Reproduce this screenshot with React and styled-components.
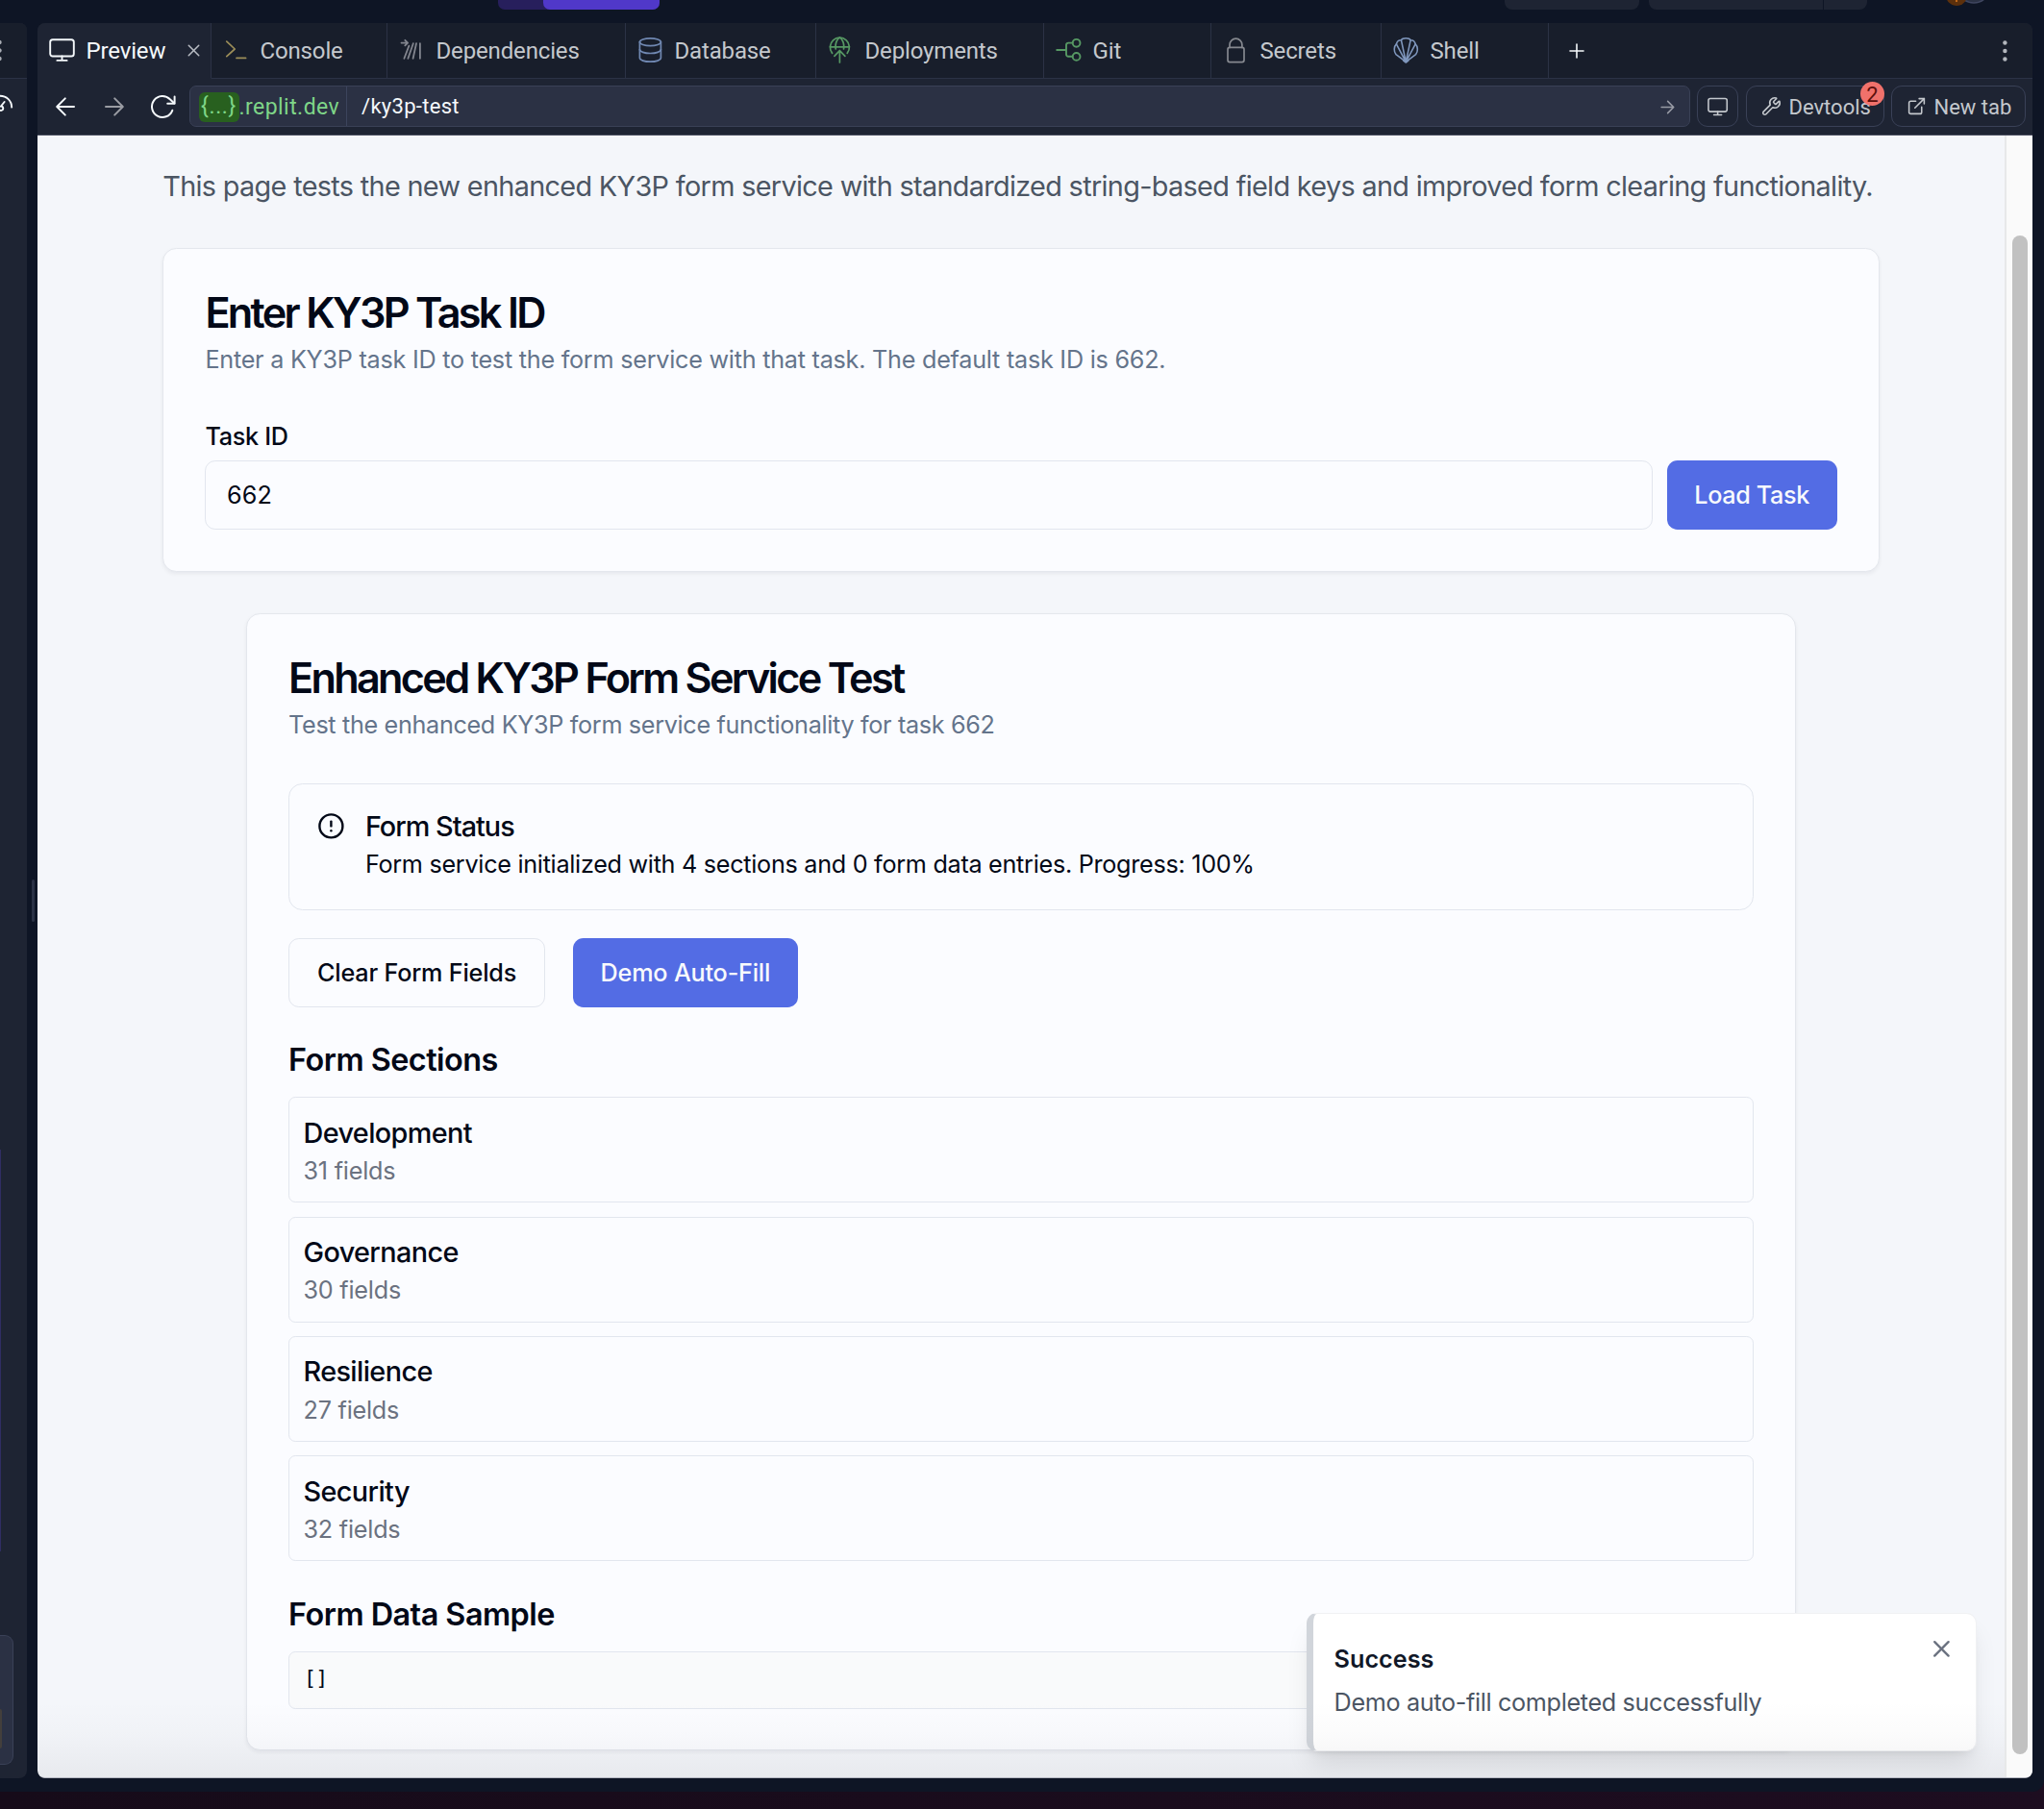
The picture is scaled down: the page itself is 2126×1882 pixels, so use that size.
import React from "react";
import styled, { createGlobalStyle } from "styled-components";
import { X, Wrench, ExternalLink, CircleAlert } from "lucide-react";

const GlobalStyle = createGlobalStyle`
  *, *::before, *::after { box-sizing: border-box; }
  html, body { margin: 0; padding: 0; background: #190b1a; }
  h1, h2, h3, p, pre { margin: 0; }
  button, input { font: inherit; color: inherit; }
`;

const ui = `Roboto, "Liberation Sans", sans-serif`;
const pageFont = `Inter, "Liberation Sans", sans-serif`;

/* ---------- window frame ---------- */

const Desktop = styled.div`
  width: 2126px;
  height: 1882px;
  overflow: hidden;
  background: linear-gradient(90deg, #160b19, #1d0d20);
  font-family: ${ui};
`;

const Window = styled.div`
  height: 1864px;
  display: flex;
  flex-direction: column;
  background: #0e1525;
  border-radius: 0 0 12px 0;
`;

const TopBar = styled.header`
  height: 24px;
  display: flex;
  align-items: flex-start;
  padding-left: 518px;
`;

const RunGroup = styled.div`
  width: 168px;
  height: 10px;
  display: flex;
  justify-content: flex-end;
  background: #271f5c;
  border-radius: 0 0 7px 7px;
`;

const RunButton = styled.div`
  width: 121px;
  height: 10px;
  background: #5038c9;
  border-radius: 0 0 7px 7px;
`;

const HeaderPill = styled.div`
  width: ${(p) => p.$width}px;
  height: 10px;
  margin-left: ${(p) => p.$gap}px;
  display: flex;
  justify-content: flex-end;
  background: #1e2433;
  border-radius: 0 0 8px 8px;
`;

const PillSplit = styled.div`
  width: 46px;
  border-left: 1px solid #0e1525;
`;

const Avatars = styled.div`
  display: flex;
  align-items: flex-start;
  margin-left: 80px;
`;

const Workspace = styled.div`
  flex: none;
  height: 1825.5px;
  display: flex;
`;

/* ---------- left sliver ---------- */

const SidePanel = styled.aside`
  width: 28px;
  display: flex;
  flex-direction: column;
  background: #1e2433;
  border-radius: 0 7px 8px 0;
  overflow: hidden;
`;

const SideTab = styled.div`
  height: 58px;
  background: #181e2b;
  border-bottom: 1px solid #2b3245;
`;

const SideTool = styled.div`
  height: 60px;
`;

const SideBody = styled.div`
  flex: 1;
  display: flex;
  flex-direction: column;
  align-items: flex-start;
  padding-top: 1054px;
`;

const SideMessage = styled.div`
  width: 1px;
  height: 418px;
  background: #302d62;
`;

const SideComposer = styled.div`
  width: 14px;
  height: 135px;
  margin-top: 87px;
  padding-top: 76px;
  background: #2b3144;
  border: 1px solid #3a4157;
  border-left: 0;
  border-radius: 0 9px 9px 0;
`;

const ComposerChip = styled.div`
  width: 2px;
  height: 41px;
  background: #433f3c;
  border-radius: 0 3px 3px 0;
`;

const Gutter = styled.div`
  width: 11px;
  display: flex;
  align-items: flex-start;
  justify-content: center;
  padding: 891px 0 0 1px;
`;

const GutterHandle = styled.div`
  width: 3px;
  height: 44px;
  border-radius: 2px;
  background: #2b3245;
`;

/* ---------- pane with tabs ---------- */

const Pane = styled.main`
  width: 2075px;
  display: flex;
  flex-direction: column;
  background: #1e2433;
  border-radius: 8px;
  overflow: hidden;
`;

const TabBar = styled.nav`
  height: 58px;
  flex: none;
  display: flex;
  background: #181e2b;
`;

const Tab = styled.div`
  width: ${(p) => p.$width}px;
  display: flex;
  align-items: center;
  gap: 10px;
  padding: 0 12px 1px;
  color: ${(p) => (p.$active ? "#f5f9fc" : "#c4c8cd")};
  background: ${(p) => (p.$active ? "#1e2433" : "transparent")};
  border-right: 1px solid #2b3245;
  border-bottom: 1px solid ${(p) => (p.$active ? "#1e2433" : "#2b3245")};
  font-size: 24px;
  line-height: 28px;
  letter-spacing: -0.15px;

  svg { flex: none; display: block; }
  svg.close { margin-left: auto; margin-right: -5px; }
`;

const TabLabel = styled.span`
  padding: 2px 0 0 0.5px;
`;

const TabBarRest = styled.div`
  flex: 1;
  display: flex;
  align-items: center;
  justify-content: space-between;
  padding: 0 21px 0 20px;
  border-bottom: 1px solid #2b3245;
`;

const Toolbar = styled.div`
  height: 59px;
  flex: none;
  display: flex;
  align-items: center;
  padding: 0 7px 1px 17px;
  border-bottom: 1px solid #4a4e5f;
  color: #c4c8cd;
  font-size: 22px;
  line-height: 26px;
`;

const NavButtons = styled.div`
  width: 141px;
  display: flex;
  align-items: center;
  gap: 27px;
  svg { flex: none; display: block; }
  svg.reload { margin-left: -3px; }
`;

const UrlBar = styled.div`
  width: 1561px;
  height: 43px;
  display: flex;
  background: #2b3144;
  border: 1px solid #3a4157;
  border-radius: 7px;
  overflow: hidden;
`;

const UrlHost = styled.div`
  width: 163px;
  flex: none;
  display: flex;
  align-items: center;
  padding: 2px 0 0 8.5px;
  border-right: 1px solid #3c445c;
  color: #7fd688;
  font-size: 23px;
  letter-spacing: 0.45px;
`;

const UrlToken = styled.span`
  width: 42px;
  height: 31px;
  line-height: 30px;
  text-align: center;
  background: #28601f;
  border-radius: 6px;
  letter-spacing: 0.6px;
`;

const UrlPath = styled.div`
  flex: 1;
  display: flex;
  align-items: center;
  justify-content: space-between;
  padding: 1px 14px 0 15px;
  color: #f5f9fc;
  letter-spacing: 0.3px;
`;

const ToolButton = styled.button`
  width: ${(p) => p.$width}px;
  height: 43px;
  margin: 0 0 0 ${(p) => p.$gap ?? 7}px;
  padding: 0 0 0 ${(p) => p.$pad}px;
  display: flex;
  align-items: center;
  gap: 7px;
  position: relative;
  background: transparent;
  border: 1px solid #3a4157;
  border-radius: 11px;
  white-space: nowrap;
  svg { flex: none; display: block; }
`;

const ToolLabel = styled.span`
  padding: 2px 0 0 0.5px;
`;

const CountBadge = styled.span`
  position: absolute;
  top: -5px;
  right: -1px;
  width: 25px;
  height: 25px;
  line-height: 27px;
  text-align: center;
  font-size: 22px;
  color: #5c0f0c;
  background: #f0716b;
  border-radius: 50%;
`;

/* ---------- previewed page ---------- */

const Viewport = styled.div`
  flex: 1;
  min-height: 0;
  display: flex;
  position: relative;
  overflow: hidden;
  background: #f4f6fa;
  border-bottom: 1px solid #b4b7c1;
  border-radius: 0 0 7px 7px;
  font-family: ${pageFont};
  color: #020817;
`;

const Page = styled.div`
  width: 2046px;
  display: flex;
  flex-direction: column;
  align-items: center;
  padding-top: 31.4px;
`;

const ScrollTrack = styled.div`
  width: 29px;
  padding: 104px 0 0 6px;
  background: #fafafa;
  border-left: 2px solid #e7e8e9;
`;

const ScrollThumb = styled.div`
  width: 16px;
  height: 1580px;
  border-radius: 8px;
  background: #c1c1c1;
`;

const Intro = styled.p`
  width: 1785.6px;
  height: 43.2px;
  line-height: 43.2px;
  margin-bottom: 42.4px;
  font-size: 28.8px;
  letter-spacing: -0.658px;
  white-space: nowrap;
  color: #4b5563;
`;

const Card = styled.section`
  width: ${(p) => p.$width}px;
  margin-bottom: 43.2px;
  padding: 45px 43.2px 42px;
  background: #fbfcff;
  border: 1px solid #e4e7ed;
  border-radius: 14.4px;
  box-shadow: 0 2px 4px rgba(15, 23, 42, 0.06);
`;

const CardTitle = styled.h2`
  font-size: 43.2px;
  line-height: 43.2px;
  font-weight: 600;
  letter-spacing: -2.7px;
  margin-bottom: 9px;
  white-space: nowrap;
`;

const CardDescription = styled.p`
  font-size: 25.2px;
  line-height: 36px;
  letter-spacing: ${(p) => p.$track}px;
  margin-bottom: 43.2px;
  color: #64748b;
`;

const Label = styled.label`
  display: block;
  font-size: 25.2px;
  line-height: 39px;
  font-weight: 500;
  letter-spacing: -0.3px;
  margin-bottom: 4.2px;
`;

const FieldRow = styled.div`
  display: flex;
  gap: 14.4px;
  margin-bottom: 1px;
`;

const TextInput = styled.input`
  flex: 1;
  height: 72px;
  padding: 0 21.6px;
  font-size: 25.2px;
  letter-spacing: 0.2px;
  background: #fbfcff;
  border: 1px solid #e2e6ee;
  border-radius: 10.8px;
  outline: none;
`;

const Button = styled.button`
  width: ${(p) => p.$width}px;
  height: 72px;
  padding: 0;
  font-size: 25.2px;
  font-weight: 500;
  letter-spacing: ${(p) => p.$track ?? -0.2}px;
  color: ${(p) => (p.$outline ? "#020817" : "#f8fafc")};
  background: ${(p) => (p.$outline ? "#fbfcff" : "#536ce4")};
  border: ${(p) => (p.$outline ? "1px solid #e2e6ee" : "0")};
  border-radius: 10.8px;
`;

const Alert = styled.div`
  height: 131.5px;
  display: flex;
  gap: 21.2px;
  padding: 28.8px;
  border: 1px solid #e2e6ee;
  border-radius: 14.4px;
`;

const AlertTitle = styled.h3`
  font-size: 28.8px;
  line-height: 30px;
  font-weight: 500;
  letter-spacing: -0.98px;
  margin-bottom: 6.4px;
`;

const AlertText = styled.p`
  font-size: 25.2px;
  line-height: 36px;
  letter-spacing: -0.285px;
`;

const Actions = styled.div`
  display: flex;
  gap: 28.8px;
  margin: 29.6px 0 28.8px;
`;

const Heading = styled.h3`
  font-size: 32.4px;
  line-height: 52px;
  font-weight: 600;
  letter-spacing: -0.53px;
  margin-bottom: 12.3px;
`;

const SectionList = styled.div`
  display: flex;
  flex-direction: column;
  gap: 14.4px;
  margin-bottom: 29.2px;
`;

const SectionItem = styled.div`
  height: 110px;
  padding: 14.4px;
  border: 1px solid #e2e6ee;
  border-radius: 7.2px;
`;

const SectionName = styled.div`
  font-size: 28.8px;
  line-height: 43.2px;
  font-weight: 500;
  letter-spacing: -0.6px;
`;

const SectionCount = styled.div`
  font-size: 25.2px;
  line-height: 36px;
  letter-spacing: -0.22px;
  color: #6b7280;
`;

const CodeSample = styled.pre`
  height: 60px;
  padding: 12.6px 15px;
  font-family: "DejaVu Sans Mono", "Liberation Mono", monospace;
  font-size: 21.6px;
  line-height: 28.8px;
  letter-spacing: -0.9px;
  background: #f9fafb;
  border: 1px solid #e2e6ee;
  border-radius: 7.2px;
`;

const BottomShade = styled.div`
  position: absolute;
  left: 0;
  right: 29px;
  bottom: 0;
  height: 80px;
  pointer-events: none;
  background: linear-gradient(rgba(20, 20, 30, 0), rgba(20, 20, 30, 0.015) 45%, rgba(20, 20, 30, 0.055));
`;

const Toast = styled.div`
  position: absolute;
  top: 1537.4px;
  right: 58px;
  width: 697px;
  height: 143.4px;
  display: flex;
  justify-content: space-between;
  padding: 29px 20.8px 0 21.6px;
  background: #fff;
  border: 1px solid #f0f1f3;
  border-left: 7px solid #d1d5db;
  border-radius: 10.8px;
  box-shadow: 0 18px 27px -5px rgba(0, 0, 0, 0.1), 0 7px 11px -7px rgba(0, 0, 0, 0.1);
`;

const ToastTitle = styled.div`
  font-size: 25.2px;
  line-height: 36px;
  font-weight: 600;
  margin-bottom: 9px;
  color: #111827;
`;

const ToastText = styled.div`
  font-size: 25.2px;
  line-height: 36px;
  letter-spacing: -0.34px;
  color: #4b5563;
`;

const ToastClose = styled.div`
  margin-top: -7px;
  color: #6b7280;
  svg { display: block; }
`;

/* ---------- icons ---------- */

const Icon = ({ children, color, size = 28, width = 1.7 }) => (
  <svg width={size} height={size} viewBox="0 0 28 28" fill="none" stroke={color}
    strokeWidth={width} strokeLinecap="round" strokeLinejoin="round">
    {children}
  </svg>
);

const MonitorIcon = ({ color = "currentColor", size, width = 1.9 }) => (
  <Icon color={color} size={size} width={width}>
    <rect x="1.2" y="3.2" width="24.6" height="17.3" rx="2.6" />
    <path d="M13.5 20.5v4.3M8.4 24.9h10.2" />
  </Icon>
);

const ConsoleIcon = () => (
  <Icon color="#9b8d58">
    <path d="M3.8 5.2 12.2 13 3.8 20.6M14 22.4h9.6" />
  </Icon>
);

const DependenciesIcon = () => (
  <Icon color="#82858e" width={1.8}>
    <path d="M2.5 6.6h6.3M6.3 3.8l2.8 2.8-2.8 2.8M10.4 9.6 5.4 22.8M14.8 7.2 9.4 22.8M18 7.2l-3.4 15.6M21.9 7.2v15.6" />
  </Icon>
);

const DatabaseIcon = () => (
  <Icon color="#7088b2">
    <ellipse cx="13.4" cy="5.7" rx="11" ry="3.9" />
    <path d="M2.4 5.7v16.6c0 2.2 4.9 3.9 11 3.9s11-1.7 11-3.9V5.7" />
    <path d="M2.4 13.6c0 2.2 4.9 3.9 11 3.9s11-1.7 11-3.9" />
  </Icon>
);

const DeploymentsIcon = () => (
  <Icon color="#569863">
    <path d="M4.6 17.4a10 10 0 1 1 15.6 0" />
    <path d="M2.4 10.8h20M8.3 13c-1-5 1.2-10.6 4.1-12.1 2.9 1.5 5.1 7.1 4.1 12.1" />
    <path d="M12.4 27V14.6M6.9 20.4l5.5-5.8 5.5 5.8" />
  </Icon>
);

const GitIcon = () => (
  <Icon color="#569863" width={1.9}>
    <path d="M1.2 14h9.8M17.6 6.6h-4.4a2.2 2.2 0 0 0-2.2 2.2v9.8a2.2 2.2 0 0 0 2.2 2.2h4.4" />
    <circle cx="21.6" cy="6.8" r="3.9" />
    <circle cx="21.6" cy="20.9" r="3.9" />
  </Icon>
);

const LockIcon = () => (
  <Icon color="#85888f">
    <rect x="5" y="11.4" width="17" height="15.2" rx="2" />
    <path d="M7 11.4V8.6a6.4 6.4 0 0 1 12.9 0v2.8" />
  </Icon>
);

const ShellIcon = () => (
  <Icon color="#7f97bd" width={1.6}>
    <path d="M13.3 26.3 3 18.6C.6 16 .6 10.2 3.4 7.8c.6-2.6 2.4-4.2 5-4.1 1.5-2.6 8.3-2.6 9.8 0 2.6-.1 4.4 1.5 5 4.1 2.8 2.4 2.8 8.2.4 10.8z" />
    <path d="M13.3 26.3 3.4 7.8M13.3 26.3 8.4 3.7M13.3 26.3 18.2 3.7M13.3 26.3 23.2 7.8" />
    <path d="M10.8 25.2h5l-2.5 1.8z" fill="#7f97bd" />
  </Icon>
);

const ArrowIcon = ({ color, flip, size = 24, width = 2 }) => (
  <svg width={size} height={size} viewBox="0 0 24 24" fill="none" stroke={color}
    strokeWidth={width} strokeLinecap="round" strokeLinejoin="round"
    transform={flip ? "scale(-1 1)" : undefined}>
    <path d="M3 12h17.6M12.2 3.4l8.6 8.6-8.6 8.6" />
  </svg>
);

const ReloadIcon = () => (
  <svg className="reload" width="28" height="28" viewBox="0 0 28 28" fill="none" stroke="#f5f9fc"
    strokeWidth="2" strokeLinecap="round" strokeLinejoin="round">
    <path d="M24.3 17.8A11 11 0 1 1 21.8 6.2L26.3 10.4" />
    <path d="M26.6 3.6v7.2h-7.4" />
  </svg>
);

const PlusIcon = () => (
  <svg width="18" height="18" viewBox="0 0 18 18" stroke="#f5f9fc" strokeWidth="1.6" strokeLinecap="round">
    <path d="M9 2v14M2 9h14" />
  </svg>
);

const DotsIcon = () => (
  <svg width="12" height="28" viewBox="0 0 12 28" fill="#b3b7bd">
    <circle cx="4.4" cy="5.5" r="2.2" />
    <circle cx="4.4" cy="14" r="2.2" />
    <circle cx="4.4" cy="22.5" r="2.2" />
  </svg>
);

/* ---------- data ---------- */

const tabs = [
  { label: "Preview", width: 181, icon: <MonitorIcon />, active: true },
  { label: "Console", width: 183, icon: <ConsoleIcon /> },
  { label: "Dependencies", width: 248, icon: <DependenciesIcon /> },
  { label: "Database", width: 198, icon: <DatabaseIcon /> },
  { label: "Deployments", width: 237, icon: <DeploymentsIcon /> },
  { label: "Git", width: 174, icon: <GitIcon /> },
  { label: "Secrets", width: 177, icon: <LockIcon /> },
  { label: "Shell", width: 174, icon: <ShellIcon /> },
];

const sections = [
  { name: "Development", count: 31 },
  { name: "Governance", count: 30 },
  { name: "Resilience", count: 27 },
  { name: "Security", count: 32 },
];

const SideStrip = () => (
  <SidePanel>
    <SideTab>
      <svg width="12" height="57" viewBox="0 0 12 57" fill="#a9adb5">
        <circle cx="-0.5" cy="20" r="2.2" />
        <circle cx="-0.5" cy="28.5" r="2.2" />
        <circle cx="-0.5" cy="37" r="2.2" />
      </svg>
    </SideTab>
    <SideTool>
      <svg width="20" height="60" viewBox="0 0 20 60" fill="none" stroke="#f5f9fc" strokeWidth="1.9" strokeLinecap="round">
        <path d="M0 17.8c7 0 12 4.8 12.2 11.8" />
        <path d="M-1 31.5a2.2 2.2 0 1 0 2-3L4.6 24" />
      </svg>
    </SideTool>
    <SideBody>
      <SideMessage />
      <SideComposer>
        <ComposerChip />
      </SideComposer>
    </SideBody>
  </SidePanel>
);

const PageContent = () => (
  <Page>
    <Intro>
      This page tests the new enhanced KY3P form service with standardized string-based field keys and improved form
      clearing functionality.
    </Intro>
    <Card $width={1785.6}>
      <CardTitle>Enter KY3P Task ID</CardTitle>
      <CardDescription $track={-0.245}>
        Enter a KY3P task ID to test the form service with that task. The default task ID is 662.
      </CardDescription>
      <Label htmlFor="task-id">Task ID</Label>
      <FieldRow>
        <TextInput id="task-id" defaultValue="662" />
        <Button $width={177} $track={-0.35}>Load Task</Button>
      </FieldRow>
    </Card>
    <Card $width={1612.2}>
      <CardTitle>Enhanced KY3P Form Service Test</CardTitle>
      <CardDescription $track={-0.33}>Test the enhanced KY3P form service functionality for task 662</CardDescription>
      <Alert>
        <CircleAlert size={28.8} strokeWidth={2} />
        <div>
          <AlertTitle>Form Status</AlertTitle>
          <AlertText>Form service initialized with 4 sections and 0 form data entries. Progress: 100%</AlertText>
        </div>
      </Alert>
      <Actions>
        <Button $outline $width={267}>Clear Form Fields</Button>
        <Button $width={234}>Demo Auto-Fill</Button>
      </Actions>
      <Heading>Form Sections</Heading>
      <SectionList>
        {sections.map((s) => (
          <SectionItem key={s.name}>
            <SectionName>{s.name}</SectionName>
            <SectionCount>{s.count} fields</SectionCount>
          </SectionItem>
        ))}
      </SectionList>
      <Heading>Form Data Sample</Heading>
      <CodeSample>[]</CodeSample>
    </Card>
  </Page>
);

export default function App() {
  return (
    <Desktop>
      <GlobalStyle />
      <Window>
        <TopBar>
          <RunGroup>
            <RunButton />
          </RunGroup>
          <HeaderPill $width={140} $gap={879} />
          <HeaderPill $width={227} $gap={10}>
            <PillSplit />
          </HeaderPill>
          <Avatars>
            <svg width="46" height="10" viewBox="0 0 46 10">
              <circle cx="31" cy="-14" r="17" fill="#2b3245" stroke="#3f4660" strokeWidth="1.5" />
              <circle cx="13" cy="-5" r="11" fill="#5c300c" />
              <path d="M13 -2v4" stroke="#e07a1f" strokeWidth="1.5" />
            </svg>
          </Avatars>
        </TopBar>
        <Workspace>
          <SideStrip />
          <Gutter>
            <GutterHandle />
          </Gutter>
          <Pane>
            <TabBar>
              {tabs.map((t) => (
                <Tab key={t.label} $width={t.width} $active={t.active}>
                  {t.icon}
                  <TabLabel>{t.label}</TabLabel>
                  {t.active && <X className="close" size={21} strokeWidth={1.7} color="#b9bdc4" />}
                </Tab>
              ))}
              <TabBarRest>
                <PlusIcon />
                <DotsIcon />
              </TabBarRest>
            </TabBar>
            <Toolbar>
              <NavButtons>
                <ArrowIcon flip color="#f5f9fc" />
                <ArrowIcon color="#9a9ca3" />
                <ReloadIcon />
              </NavButtons>
              <UrlBar>
                <UrlHost>
                  <UrlToken>{"{...}"}</UrlToken>.replit.dev
                </UrlHost>
                <UrlPath>
                  /ky3p-test
                  <ArrowIcon color="#989ba5" size={17} width={2.2} />
                </UrlPath>
              </UrlBar>
              <ToolButton $width={43} $pad={10}>
                <MonitorIcon size={22} width={2} />
              </ToolButton>
              <ToolButton $width={144} $pad={15} $gap={8}>
                <Wrench size={21} strokeWidth={1.8} />
                <ToolLabel>Devtools</ToolLabel>
                <CountBadge>2</CountBadge>
              </ToolButton>
              <ToolButton $width={140} $pad={15}>
                <ExternalLink size={21} strokeWidth={1.8} />
                <ToolLabel>New tab</ToolLabel>
              </ToolButton>
            </Toolbar>
            <Viewport>
              <PageContent />
              <ScrollTrack>
                <ScrollThumb />
              </ScrollTrack>
              <Toast>
                <div>
                  <ToastTitle>Success</ToastTitle>
                  <ToastText>Demo auto-fill completed successfully</ToastText>
                </div>
                <ToastClose>
                  <X size={28.8} strokeWidth={2} />
                </ToastClose>
              </Toast>
              <BottomShade />
            </Viewport>
          </Pane>
        </Workspace>
      </Window>
    </Desktop>
  );
}
